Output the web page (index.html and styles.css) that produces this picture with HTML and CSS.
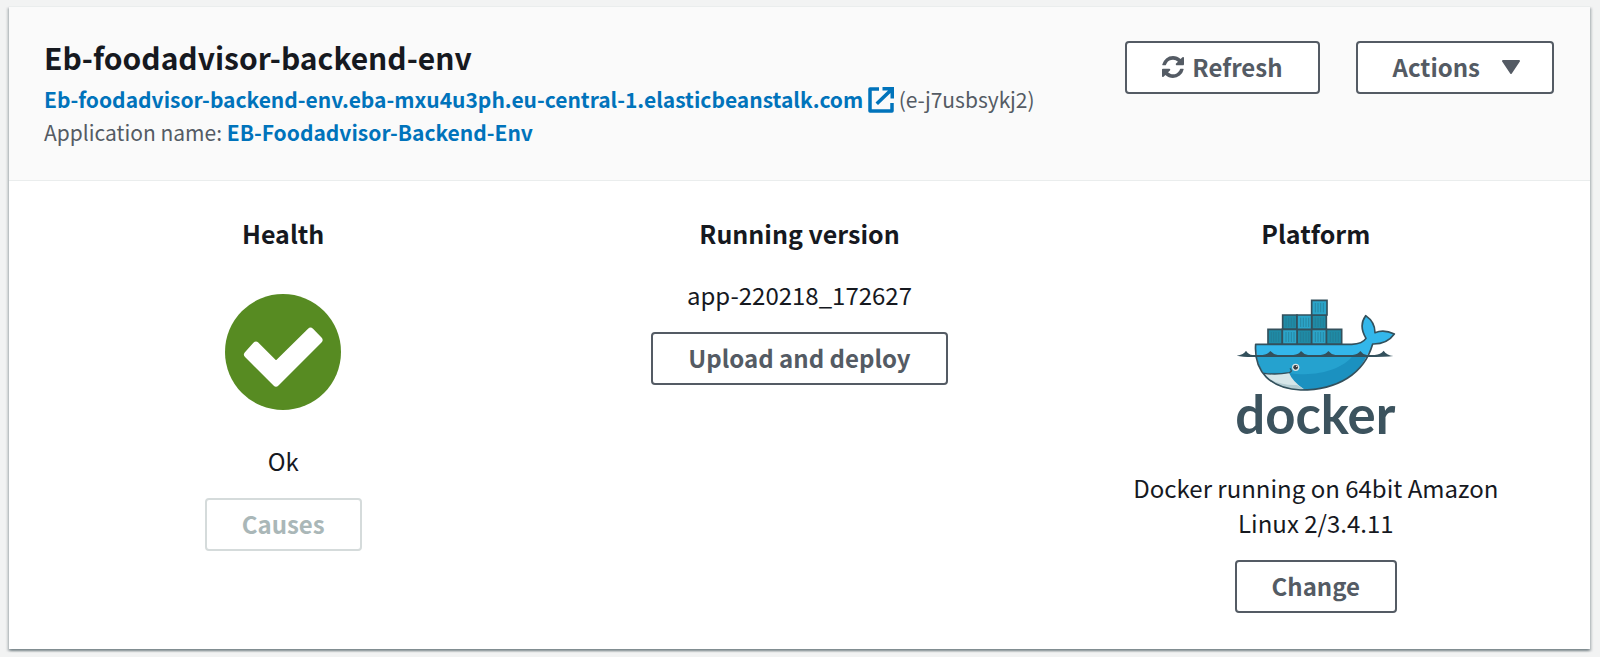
FILE: index.html
```html
<!DOCTYPE html>
<html lang="en">
<head>
<meta charset="utf-8">
<title>Eb-foodadvisor-backend-env</title>
<link rel="stylesheet" href="styles.css">
</head>
<body>
<main class="card">
  <header class="card-header">
    <div class="summary">
      <h1 class="title">Eb-foodadvisor-backend-env</h1>
      <p class="detail">
        <a class="link" href="#">Eb-foodadvisor-backend-env.eba-mxu4u3ph.eu-central-1.elasticbeanstalk.com</a>
        <svg class="external" viewBox="0 0 26 26" aria-hidden="true"><path d="M11 2H2v22h22v-8" fill="none" stroke="currentColor" stroke-width="3.500" stroke-linejoin="round"/><path d="M14.500 0H26v11.500h-3.500V6L10 18l-2.500-2.500L20 3.500h-5.500z" fill="currentColor"/></svg>
        <span>(e-j7usbsykj2)</span>
      </p>
      <p class="detail"><span>Application name:</span> <a class="link" href="#">EB-Foodadvisor-Backend-Env</a></p>
    </div>
    <div class="toolbar">
      <button class="button" type="button">
        <svg class="refresh" viewBox="0 0 1536 1536" aria-hidden="true"><path fill="currentColor" d="M1511 928q0 5-1 7-64 268-268 434.500T764 1536q-146 0-282.500-55T238 1324l-129 129q-19 19-45 19t-45-19-19-45V960q0-26 19-45t45-19h448q26 0 45 19t19 45-19 45l-137 137q71 66 161 102t187 36q134 0 250-65t186-179q11-17 53-117 8-23 30-23h192q13 0 22.500 9.500t9.500 22.500zm25-800v448q0 26-19 45t-45 19h-448q-26 0-45-19t-19-45 19-45l138-138Q969 256 768 256q-134 0-250 65T332 500q-11 17-53 117-8 23-30 23H50q-13 0-22.500-9.500T18 608v-7q65-268 270-434.500T768 0q146 0 284 55.500T1297 212l130-129q19-19 45-19t45 19 19 45z"/></svg>
        <span>Refresh</span>
      </button>
      <button class="button button-menu" type="button" aria-haspopup="true">
        <span>Actions</span>
        <svg class="caret" viewBox="0 0 18 14" aria-hidden="true"><path d="M1 1h16L9 13z" fill="currentColor" stroke="currentColor" stroke-width="2" stroke-linejoin="round"/></svg>
      </button>
    </div>
  </header>
  <div class="columns">
    <section class="column">
      <h2 class="heading">Health</h2>
      <svg class="health" viewBox="0 0 116 116" role="img" aria-label="Healthy"><circle cx="58" cy="58" r="58" fill="#578b22"/><path d="M22.500 60.500l8.500-9.300 20 20L85.500 37.200l8.500 8.800L51 89z" fill="#fff" stroke="#fff" stroke-width="7" stroke-linejoin="round"/></svg>
      <p class="value">Ok</p>
      <button class="button" type="button" disabled>Causes</button>
    </section>
    <section class="column">
      <h2 class="heading">Running version</h2>
      <p class="value version">app-220218_172627</p>
      <button class="button" type="button">Upload and deploy</button>
    </section>
    <section class="column">
      <h2 class="heading">Platform</h2>
      <svg class="docker" viewBox="45 42 483 441" role="img" aria-label="Docker">
        <g stroke="#33505c" stroke-width="5">
          <path fill="#1f8ba6" d="M144 133h43v45h-43zM188 90h43v43h-43zM275 90h44v43h-44zM231 133h44v45h-44zM319 133h46v45h-46z"/>
          <path fill="#2ba5c9" d="M275 46h46v44h-46zM231 90h44v43h-44zM187 133h44v45h-44zM275 133h44v45h-44z"/>
        </g>
        <path stroke="#267990" stroke-width="2" d="M154 141v30M161 141v30M168 141v30M176 141v30M198 141v30M206 141v30M214 141v30M222 141v30M242 141v30M250 141v30M258 141v30M266 141v30M286 141v30M294 141v30M302 141v30M310 141v30M331 141v30M339 141v30M347 141v30M355 141v30M198 98v28M206 98v28M214 98v28M222 98v28M242 98v28M250 98v28M258 98v28M266 98v28M286 98v28M294 98v28M302 98v28M310 98v28M286 54v28M294 54v28M302 54v28M310 54v28"/>
        <path fill="#33b7eb" d="M107 178H395Q428 176 438 160Q415 122 437 92Q465 111 465 143Q492 132 523 147Q501 178 458 177Q453 195 440 213H111Q106 195 107 178Z"/>
        <path fill="#1b91c0" d="M110 212H441C410 275 345 314 242 315C165 312 117 268 110 212Z"/>
        <path fill="#25a2cf" d="M111 213H398C365 254 285 278 204 263L131 263Q115 240 111 213Z"/>
        <path fill="#d6e6e9" d="M132 265Q171 270 207 263Q216 287 252 313C195 318 153 298 132 265Z"/>
        <path fill="#b4cdd3" d="M142 278Q180 302 231 300L252 313C196 317 161 299 142 278Z"/>
        <path fill="none" stroke="#33505c" stroke-width="4" d="M132 265Q171 270 207 263Q219 260 210 250"/>
        <path fill="none" stroke="#33505c" stroke-width="5" stroke-linejoin="round" d="M107 178H395Q428 176 438 160Q415 122 437 92Q465 111 465 143Q492 132 523 147Q501 178 458 177C432 267 353 315 242 315C153 311 101 261 107 178Z"/>
        <path fill="#33505c" d="M50 212Q72 209 78 197Q85 209 98 210H128Q143 208 151 198Q160 208 173 210H220Q237 208 243 198Q251 208 264 210H302Q318 208 325 198Q333 208 346 210H398Q414 208 421 198Q428 208 440 210H464Q482 208 491 197Q499 210 520 213Q500 216 440 216H110Q70 217 50 212Z"/>
        <circle cx="227" cy="247" r="11" fill="#d8e3e5"/><circle cx="227" cy="247" r="7" fill="#393d43"/><circle cx="230" cy="244" r="2" fill="#fff"/>
        <text class="wordmark" x="286" y="448" text-anchor="middle">docker</text>
      </svg>
      <p class="value">Docker running on 64bit Amazon Linux 2/3.4.11</p>
      <button class="button" type="button">Change</button>
    </section>
  </div>
</main>
</body>
</html>
```
FILE: styles.css
```css
* { box-sizing: border-box; }

body {
  margin: 0;
  padding: 6px 10px 8px 9px;
  background: #f2f3f3;
  color: #16191f;
  font: 24px/35px "Noto Sans CJK SC", "Noto Sans", sans-serif;
}

h1, h2, p { margin: 0; }

.card {
  background: #fff;
  border-top: 1px solid #eaeded;
  box-shadow: 0 2px 2px rgba(0, 28, 36, .3), 2px 2px 2px rgba(0, 28, 36, .15), -2px 2px 2px rgba(0, 28, 36, .15);
}

.card-header {
  display: flex;
  justify-content: space-between;
  gap: 36px;
  padding: 34px 36px 31px 35px;
  background: #fafafa;
  border-bottom: 1px solid #eaeded;
}

.title { font-size: 30px; line-height: 32px; padding-bottom: 10px; }

.detail { color: #545b64; font-size: 21px; line-height: 33px; }

.link { color: #0073bb; font-weight: 700; text-decoration: none; }

.external { width: 26px; height: 26px; color: #0073bb; vertical-align: -5px; }

.toolbar { display: flex; align-items: flex-start; gap: 36px; }

.button {
  display: inline-flex;
  align-items: center;
  justify-content: center;
  gap: 8px;
  padding: 6px 35px 8px;
  border: 2px solid #545b64;
  border-radius: 4px;
  background: #fff;
  color: #545b64;
  font: inherit;
  font-weight: 700;
}

.button:disabled { border-color: #d5dbdb; color: #aab7b8; }

.button-menu { gap: 22px; padding-right: 32px; }

.refresh { width: 22px; height: 22px; }

.caret { width: 18px; height: 14px; }

.columns {
  display: grid;
  grid-template-columns: repeat(3, 1fr);
  gap: 36px;
  padding: 35px 34px 36px;
}

.column {
  display: flex;
  flex-direction: column;
  align-items: center;
  padding: 0 36px;
  text-align: center;
}

.heading { font-size: 25px; line-height: 35px; }

.value { padding-bottom: 20px; }

.version { padding-top: 26px; }

.health { width: 116px; height: 116px; margin: 43px 0 33px; }

.docker { width: 161px; height: 147px; margin: 48px 0 24px; }

.wordmark { fill: #3c535e; font: 700 158px Lato, sans-serif; }
```
